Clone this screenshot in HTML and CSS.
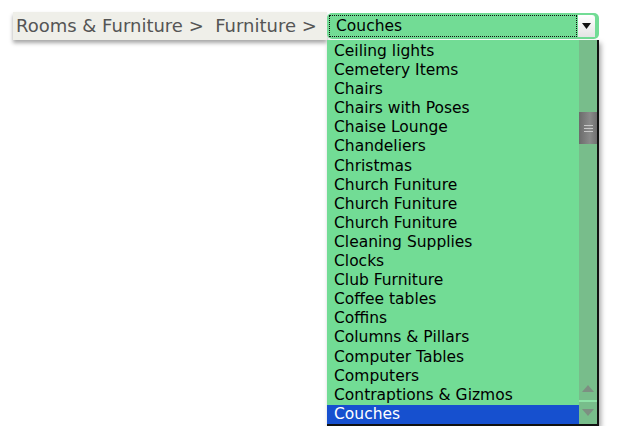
FILE: index.html
```html
<!DOCTYPE html>
<html lang="en">
<head>
    <meta charset="UTF-8">
    <title>Rooms &amp; Furniture</title>
    <link rel="stylesheet" href="styles.css">
</head>
<body>
    <div class="toolbar">
        <div class="crumbs">Rooms &amp; Furniture &gt;&nbsp; Furniture &gt;</div>
        <div class="picker">
            <div class="picker-box">
                <span class="picker-value">Couches</span>
                <span class="picker-arrow">
                    <svg width="9" height="6" viewBox="0 0 9 6"><path d="M0 0h9L4.5 6z" fill="#111"/></svg>
                </span>
            </div>
            <div class="dropdown">
                <div class="options">
                    <div class="option">Ceiling lights</div>
                    <div class="option">Cemetery Items</div>
                    <div class="option">Chairs</div>
                    <div class="option">Chairs with Poses</div>
                    <div class="option">Chaise Lounge</div>
                    <div class="option">Chandeliers</div>
                    <div class="option">Christmas</div>
                    <div class="option">Church Funiture</div>
                    <div class="option">Church Funiture</div>
                    <div class="option">Church Funiture</div>
                    <div class="option">Cleaning Supplies</div>
                    <div class="option">Clocks</div>
                    <div class="option">Club Furniture</div>
                    <div class="option">Coffee tables</div>
                    <div class="option">Coffins</div>
                    <div class="option">Columns &amp; Pillars</div>
                    <div class="option">Computer Tables</div>
                    <div class="option">Computers</div>
                    <div class="option">Contraptions &amp; Gizmos</div>
                    <div class="option selected">Couches</div>
                </div>
                <div class="scrollbar">
                    <div class="thumb"><b></b><b></b><b></b></div>
                    <div class="arrows">
                        <div class="arrow-btn">
                            <svg width="12" height="7" viewBox="0 0 12 7"><path d="M0 7L6 0l6 7z" fill="#7d8f82"/></svg>
                        </div>
                        <div class="arrow-btn arrow-down">
                            <svg width="12" height="7" viewBox="0 0 12 7"><path d="M0 0h12L6 7z" fill="#7d8f82"/></svg>
                        </div>
                    </div>
                </div>
            </div>
        </div>
    </div>
</body>
</html>
```

FILE: styles.css
```css
body {
    margin: 0;
    background: #fff;
    font-family: 'DejaVu Sans', 'Liberation Sans', sans-serif;
}

.toolbar {
    display: flex;
    align-items: flex-start;
    padding: 12px 0 0 13px;
}

.crumbs {
    background: #efefe9;
    color: #555;
    font-size: 18px;
    line-height: 27px;
    height: 28px;
    padding-left: 3px;
    width: 311px;
    white-space: nowrap;
    box-shadow: 0 3px 4px rgba(0, 0, 0, 0.35);
}

.picker {
    display: flex;
    flex-direction: column;
    width: 272px;
}

.picker-box {
    display: flex;
    align-items: center;
    height: 26px;
    margin-top: 1px;
    background: #72dc95;
    border-radius: 5px;
    padding: 0 4px 0 2px;
    box-sizing: border-box;
}

.picker-value {
    flex: 1;
    height: 20px;
    line-height: 20px;
    border: 1px dotted #111;
    padding-left: 6px;
    font-size: 15.5px;
    color: #000;
}

.picker-arrow {
    width: 17px;
    height: 22px;
    margin-left: 1px;
    background: linear-gradient(#fff, #e4e4e4);
    border-radius: 0 3px 0 0;
    display: flex;
    align-items: center;
    justify-content: center;
}

.dropdown {
    display: flex;
    margin-top: 1px;
    background: #72dc95;
    border-right: 2px solid #111;
    border-bottom: 2px solid #111;
    box-shadow: 2px 3px 5px rgba(0, 0, 0, 0.35);
}

.options {
    flex: 1;
    padding-top: 2px;
}

.option {
    font-size: 15.5px;
    line-height: 19.1px;
    height: 19.1px;
    padding-left: 7px;
    color: #000;
    white-space: nowrap;
}

.option.selected {
    background: #1650cf;
    color: #fff;
}

.scrollbar {
    width: 18px;
    background: #78bd8b;
    display: flex;
    flex-direction: column;
    justify-content: space-between;
    padding-top: 72px;
}

.thumb {
    height: 32px;
    background: linear-gradient(90deg, #6b6b6b, #8a8a8a 60%, #707070);
    display: flex;
    flex-direction: column;
    align-items: center;
    justify-content: center;
    gap: 2px;
}

.thumb b {
    display: block;
    width: 9px;
    height: 1px;
    background: #c8c8c8;
}

.arrows {
    display: flex;
    flex-direction: column;
}

.arrow-btn {
    height: 22px;
    display: flex;
    align-items: center;
    justify-content: center;
}

.arrow-down {
    border-top: 2px solid #8ee3a8;
}
```
